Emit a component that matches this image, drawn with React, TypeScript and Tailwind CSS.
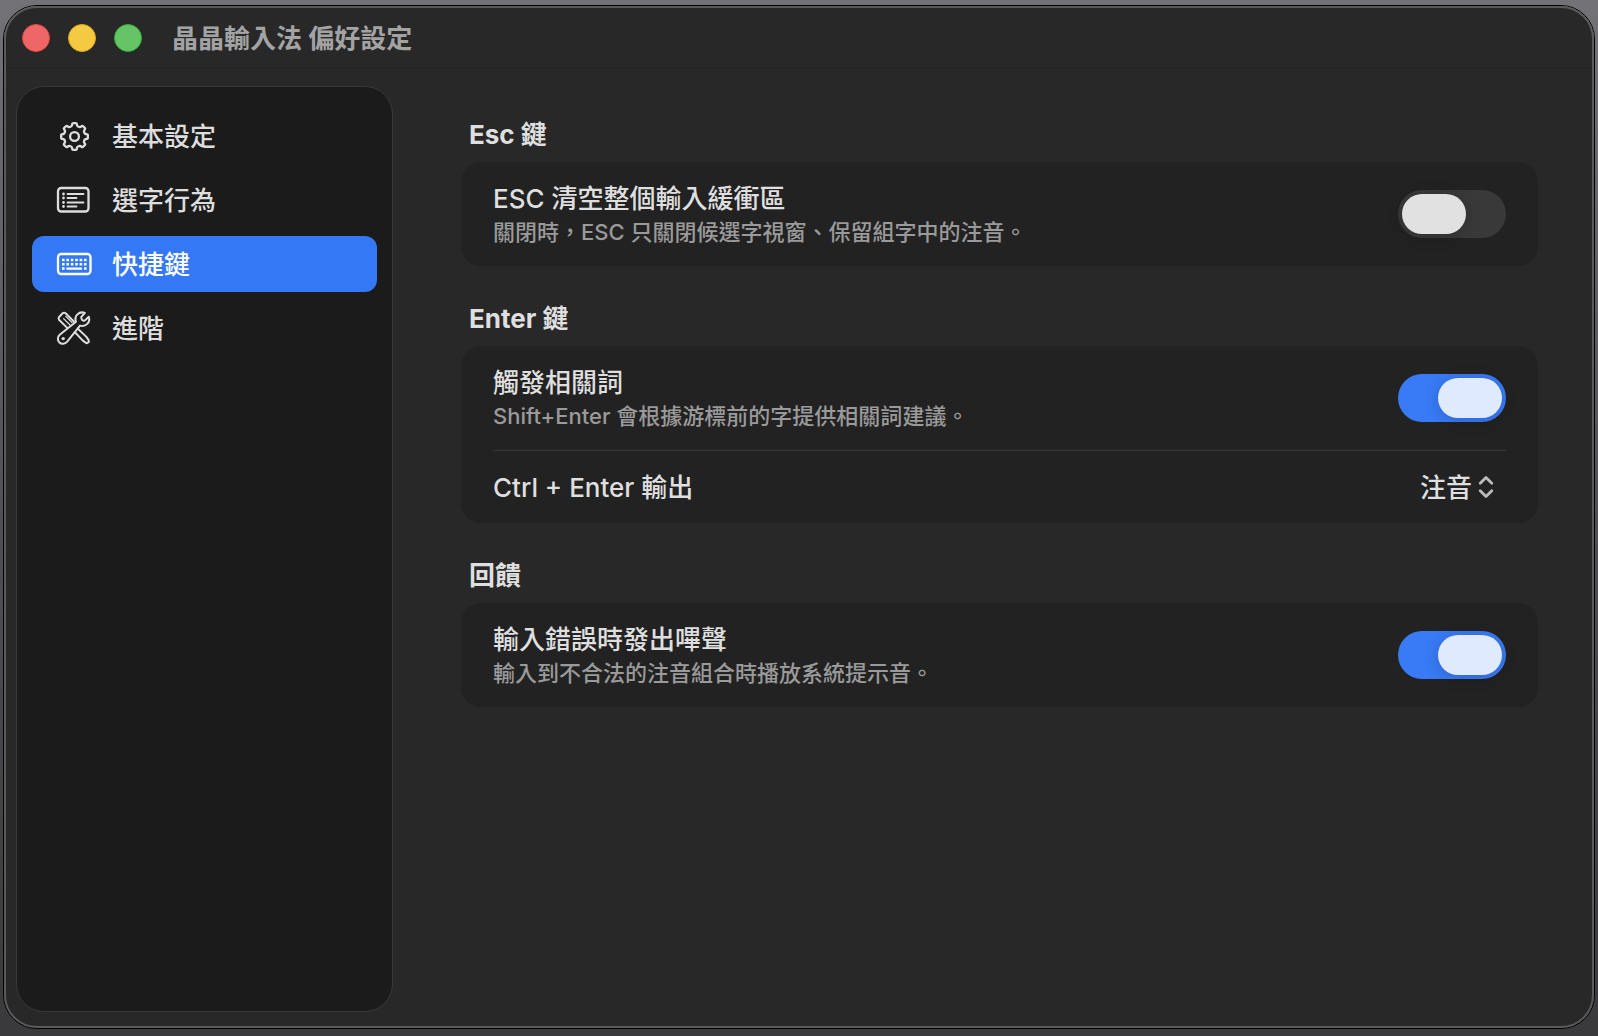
import { useState } from "react";
import type { ReactNode } from "react";

type TabId = "general" | "candidates" | "shortcuts" | "advanced";

function gearPath(cx: number, cy: number, outer: number, inner: number) {
  const point = (radius: number, degrees: number) => {
    const angle = ((degrees - 90) * Math.PI) / 180;
    return `${(cx + radius * Math.cos(angle)).toFixed(2)} ${(cy + radius * Math.sin(angle)).toFixed(2)}`;
  };

  let d = "";
  for (let i = 0; i < 8; i++) {
    const mid = i * 45;
    d += `${i === 0 ? "M" : "L"}${point(inner, mid - 16)}`;
    d += `Q${point(inner + 0.6, mid - 12)} ${point(outer - 1.2, mid - 11)}`;
    d += `Q${point(outer + 0.2, mid - 10)} ${point(outer, mid - 5)}`;
    d += `L${point(outer, mid + 5)}`;
    d += `Q${point(outer + 0.2, mid + 10)} ${point(outer - 1.2, mid + 11)}`;
    d += `Q${point(inner + 0.6, mid + 12)} ${point(inner, mid + 16)}`;
    d += `Q${point(inner - 0.4, mid + 22.5)} ${point(inner, mid + 29)}`;
  }
  return `${d}Z`;
}

function GearIcon() {
  return (
    <svg width="36" height="36" viewBox="0 0 36 36" fill="none" stroke="currentColor" strokeWidth="2.3" strokeLinejoin="round" aria-hidden="true">
      <path d={gearPath(18.5, 18.5, 13.4, 10.8)} />
      <circle cx="18.5" cy="18.5" r="4.4" />
    </svg>
  );
}

function ListIcon() {
  return (
    <svg width="36" height="36" viewBox="0 0 36 36" fill="none" stroke="currentColor" strokeLinecap="round" aria-hidden="true">
      <rect x="2" y="6" width="30.5" height="23.5" rx="3.2" strokeWidth="2.3" />
      <path d="M11.5 12H27.5M11.5 16H20.5M11.5 20.5H27.5M11.5 24.5H20.5" strokeWidth="1.8" />
      <path d="M7.5 12h.01M7.5 16h.01M7.5 20.5h.01M7.5 24.5h.01" strokeWidth="2.8" />
    </svg>
  );
}

function KeyboardIcon() {
  return (
    <svg width="36" height="36" viewBox="0 0 36 36" fill="none" stroke="currentColor" aria-hidden="true">
      <rect x="2" y="8" width="32.5" height="20" rx="3.2" strokeWidth="2.3" />
      <path
        d="M6 14h2.6M10.4 14h2.6M14.8 14h2.6M19.2 14h2.6M23.6 14h2.6M28 14h2.6M6 18.3h2.6M10.4 18.3h2.6M14.8 18.3h2.6M19.2 18.3h2.6M23.6 18.3h2.6M28 18.3h2.6M6 22.6h2.6M28 22.6h2.6"
        strokeWidth="2.5"
      />
      <path d="M11.3 22.7h13.8" strokeWidth="2.3" strokeLinecap="round" />
    </svg>
  );
}

function ToolsIcon() {
  return (
    <svg width="36" height="36" viewBox="0 0 36 36" fill="none" stroke="currentColor" strokeWidth="2" strokeLinejoin="round" strokeLinecap="round" aria-hidden="true">
      <path d="M3 9.8 Q2 8.3 3.1 7 L6.6 3.3 Q8 2.1 9.6 3.2 L18.3 12 L18.8 15.8 L30.4 26.9 L32.6 30.1 Q33.4 31.6 32.2 32.6 Q31 33.6 29.6 32.6 L26.6 30.4 L15.6 18.8 L12 18.6 Z" />
      <path d="M7.6 8.6 L13.8 14.8 M9.8 6.4 L16 12.6" strokeWidth="1.3" />
      <path
        d="M28.9 2.9 C23 0.8 17.8 6 20 11.8 L3.7 24.8 C1.2 27 1.4 30.6 3.4 32.4 C5.5 34.3 9 34 11 31.8 L24 15.6 C29.7 17.3 34.7 12.3 32.8 6.7 L29 10.4 Q27.6 11.2 26.2 10 Q24.6 8.4 25.4 6.8 Z"
        className="fill-[#1b1b1b]"
      />
      <circle cx="7.2" cy="28.6" r="1.7" fill="currentColor" stroke="none" />
    </svg>
  );
}

function ChevronsIcon() {
  return (
    <svg
      width="16"
      height="24"
      viewBox="0 0 16 24"
      fill="none"
      stroke="#bcbcbc"
      strokeWidth="2.8"
      strokeLinecap="round"
      strokeLinejoin="round"
      aria-hidden="true"
      className="pointer-events-none absolute right-3"
    >
      <path d="M2.2 8.2 8 2.4l5.8 5.8M2.2 15.8 8 21.6l5.8-5.8" />
    </svg>
  );
}

const tabs: { id: TabId; label: string; icon: ReactNode }[] = [
  { id: "general", label: "基本設定", icon: <GearIcon /> },
  { id: "candidates", label: "選字行為", icon: <ListIcon /> },
  { id: "shortcuts", label: "快捷鍵", icon: <KeyboardIcon /> },
  { id: "advanced", label: "進階", icon: <ToolsIcon /> },
];

function Section({ title, children }: { title: string; children: ReactNode }) {
  return (
    <section>
      <h2 className="mb-2 px-2 text-[26px] leading-[38px] font-bold">{title}</h2>
      <div className="rounded-[20px] bg-[#222222] px-8">{children}</div>
    </section>
  );
}

function SwitchRow({
  id,
  label,
  description,
  defaultChecked = false,
}: {
  id: string;
  label: string;
  description: string;
  defaultChecked?: boolean;
}) {
  const [checked, setChecked] = useState(defaultChecked);

  return (
    <div className="flex h-[104px] items-center justify-between gap-6">
      <div>
        <label htmlFor={id} className="block text-[26px] leading-[38px]">
          {label}
        </label>
        <p id={`${id}-description`} className="pb-0.5 text-[22px] leading-7 text-[#9a9a9a]">
          {description}
        </p>
      </div>
      <input
        id={id}
        type="checkbox"
        role="switch"
        aria-describedby={`${id}-description`}
        checked={checked}
        onChange={(event) => setChecked(event.target.checked)}
        className="h-12 w-[108px] shrink-0 appearance-none rounded-full bg-[#393939] p-1 before:block before:h-10 before:w-16 before:rounded-full before:bg-[#e1e1e1] before:shadow-[0_2px_16px_rgba(0,0,0,0.2)] before:transition-transform checked:bg-[#397bf6] checked:before:translate-x-9 checked:before:bg-[#e0eafe]"
      />
    </div>
  );
}

export default function App() {
  const [activeTab, setActiveTab] = useState<TabId>("shortcuts");

  return (
    <div className="flex min-h-screen bg-linear-to-b from-[#737377] via-[#505055] to-[#3a3a3c] px-[3px] pt-[5px] pb-[7px] font-['Inter','Noto_Sans_CJK_TC',sans-serif] font-medium text-[#dfdfdf]">
      <div className="flex flex-1 rounded-[34px] border border-black">
        <div className="flex flex-1 flex-col rounded-[33px] border-2 border-[#5a5a5a] bg-[#282828]">
          <header className="flex h-[61px] items-center border-b border-[#232323] pl-4">
            <div className="flex gap-[18px]">
              <button type="button" aria-label="關閉" className="size-7 rounded-full border border-[#e2463f] bg-[#ee6766]" />
              <button type="button" aria-label="縮到最小" className="size-7 rounded-full border border-[#e0a91c] bg-[#f4ca43]" />
              <button type="button" aria-label="縮放" className="size-7 rounded-full border border-[#35ac3a] bg-[#65c466]" />
            </div>
            <h1 className="ml-[30px] pt-0.5 text-[26px] leading-9 font-bold text-[#a3a3a3]">晶晶輸入法 偏好設定</h1>
          </header>

          <div className="flex flex-1">
            <nav className="mt-[17px] mb-3.5 ml-2.5 flex w-[377px] shrink-0 flex-col gap-2 rounded-[28px] border border-[#393939] bg-[#1b1b1b] px-[15px] py-[21px]">
              {tabs.map((tab) => (
                <button
                  key={tab.id}
                  type="button"
                  onClick={() => setActiveTab(tab.id)}
                  aria-current={tab.id === activeTab ? "page" : undefined}
                  className={`flex h-14 items-center gap-5 rounded-xl pl-6 text-[26px] leading-9 ${
                    tab.id === activeTab ? "bg-[#3478f6] text-white" : "text-[#dddddd]"
                  }`}
                >
                  {tab.icon}
                  <span className="pt-0.5">{tab.label}</span>
                </button>
              ))}
            </nav>

            <main className="flex flex-1 flex-col gap-[34px] pt-[47px] pr-[54px] pl-[68px]">
              <Section title="Esc 鍵">
                <SwitchRow
                  id="esc-clear"
                  label="ESC 清空整個輸入緩衝區"
                  description="關閉時，ESC 只關閉候選字視窗、保留組字中的注音。"
                />
              </Section>

              <Section title="Enter 鍵">
                <SwitchRow
                  id="related-words"
                  label="觸發相關詞"
                  description="Shift+Enter 會根據游標前的字提供相關詞建議。"
                  defaultChecked
                />
                <div className="flex h-[73px] items-center justify-between border-t border-[#383838] text-[26px] leading-9">
                  <label htmlFor="ctrl-enter" className="pt-0.5">
                    Ctrl + Enter 輸出
                  </label>
                  <div className="relative flex items-center">
                    <select id="ctrl-enter" className="appearance-none bg-transparent pt-0.5 pr-[33px]">
                      <option>注音</option>
                    </select>
                    <ChevronsIcon />
                  </div>
                </div>
              </Section>

              <Section title="回饋">
                <SwitchRow
                  id="error-beep"
                  label="輸入錯誤時發出嗶聲"
                  description="輸入到不合法的注音組合時播放系統提示音。"
                  defaultChecked
                />
              </Section>
            </main>
          </div>
        </div>
      </div>
    </div>
  );
}
